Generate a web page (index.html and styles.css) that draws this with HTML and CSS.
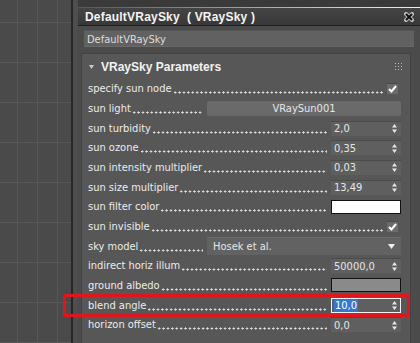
FILE: index.html
```html
<!DOCTYPE html>
<html lang="en">
<head>
    <meta charset="UTF-8">
    <title>DefaultVRaySky</title>
    <link rel="stylesheet" href="styles.css">
</head>
<body>
<div class="screen">
    <div class="viewport"></div>
    <div class="viewport-edge"></div>

    <div class="panel">
        <div class="top-strip"></div>
        <div class="titlebar">
            <span class="title">DefaultVRaySky&nbsp; ( VRaySky )</span>
            <svg class="close" width="10" height="10" viewBox="0 0 10 10">
                <path d="M2 2 L8 8 M8 2 L2 8" stroke="#bdbdbd" stroke-width="4" stroke-linecap="square"/>
                <path d="M2 2 L8 8 M8 2 L2 8" stroke="#111" stroke-width="2"/>
            </svg>
        </div>
        <div class="namebar">
            <div class="name-field">DefaultVRaySky</div>
        </div>

        <div class="rollout">
            <div class="rollout-head">
                <svg class="caret" width="5" height="4" viewBox="0 0 5 4"><path d="M0 0 H5 L2.5 4 Z" fill="#c8c8c8"/></svg>
                <span class="rollout-title">VRaySky Parameters</span>
                <svg class="grip" width="7" height="7" viewBox="0 0 7 7" fill="#bcbcbc">
                    <rect x="0" y="0" width="1" height="1"/><rect x="3" y="0" width="1" height="1"/><rect x="6" y="0" width="1" height="1"/>
                    <rect x="0" y="3" width="1" height="1"/><rect x="3" y="3" width="1" height="1"/><rect x="6" y="3" width="1" height="1"/>
                    <rect x="0" y="6" width="1" height="1"/><rect x="3" y="6" width="1" height="1"/><rect x="6" y="6" width="1" height="1"/>
                </svg>
            </div>

            <div class="rows">
                <div class="row">
                    <span class="label">specify sun node</span><span class="dots"></span>
                    <span class="check"><svg width="9" height="8" viewBox="0 0 9 8"><path d="M1 4 L3.5 6.5 L8 1" fill="none" stroke="#fff" stroke-width="2"/></svg></span>
                </div>
                <div class="row">
                    <span class="label">sun light</span><span class="dots"></span>
                    <span class="button">VRaySun001</span>
                </div>
                <div class="row">
                    <span class="label">sun turbidity</span><span class="dots"></span>
                    <span class="spinner"><span class="value">2,0</span><svg class="arrows" width="5" height="9" viewBox="0 0 5 9"><path d="M0 3.5 L2.5 0 L5 3.5 Z M0 5.5 L5 5.5 L2.5 9 Z" fill="#e6e6e6"/></svg></span>
                </div>
                <div class="row">
                    <span class="label">sun ozone</span><span class="dots"></span>
                    <span class="spinner"><span class="value">0,35</span><svg class="arrows" width="5" height="9" viewBox="0 0 5 9"><path d="M0 3.5 L2.5 0 L5 3.5 Z M0 5.5 L5 5.5 L2.5 9 Z" fill="#e6e6e6"/></svg></span>
                </div>
                <div class="row">
                    <span class="label">sun intensity multiplier</span><span class="dots"></span>
                    <span class="spinner"><span class="value">0,03</span><svg class="arrows" width="5" height="9" viewBox="0 0 5 9"><path d="M0 3.5 L2.5 0 L5 3.5 Z M0 5.5 L5 5.5 L2.5 9 Z" fill="#e6e6e6"/></svg></span>
                </div>
                <div class="row">
                    <span class="label">sun size multiplier</span><span class="dots"></span>
                    <span class="spinner"><span class="value">13,49</span><svg class="arrows" width="5" height="9" viewBox="0 0 5 9"><path d="M0 3.5 L2.5 0 L5 3.5 Z M0 5.5 L5 5.5 L2.5 9 Z" fill="#e6e6e6"/></svg></span>
                </div>
                <div class="row">
                    <span class="label">sun filter color</span><span class="dots"></span>
                    <span class="swatch white"></span>
                </div>
                <div class="row">
                    <span class="label">sun invisible</span><span class="dots"></span>
                    <span class="check"><svg width="9" height="8" viewBox="0 0 9 8"><path d="M1 4 L3.5 6.5 L8 1" fill="none" stroke="#fff" stroke-width="2"/></svg></span>
                </div>
                <div class="row">
                    <span class="label">sky model</span><span class="dots"></span>
                    <span class="dropdown">Hosek et al.
                        <svg class="drop-arrow" width="7" height="5" viewBox="0 0 7 5"><path d="M0 0 H7 L3.5 5 Z" fill="#eee"/></svg>
                    </span>
                </div>
                <div class="row">
                    <span class="label">indirect horiz illum</span><span class="dots"></span>
                    <span class="spinner"><span class="value">50000,0</span><svg class="arrows" width="5" height="9" viewBox="0 0 5 9"><path d="M0 3.5 L2.5 0 L5 3.5 Z M0 5.5 L5 5.5 L2.5 9 Z" fill="#e6e6e6"/></svg></span>
                </div>
                <div class="row">
                    <span class="label">ground albedo</span><span class="dots"></span>
                    <span class="swatch grey"></span>
                </div>
                <div class="row">
                    <span class="label">blend angle</span><span class="dots"></span>
                    <span class="spinner focused"><span class="value"><span class="selected">10,0</span></span><svg class="arrows" width="5" height="9" viewBox="0 0 5 9"><path d="M0 3.5 L2.5 0 L5 3.5 Z M0 5.5 L5 5.5 L2.5 9 Z" fill="#e6e6e6"/></svg></span>
                </div>
                <div class="row">
                    <span class="label">horizon offset</span><span class="dots"></span>
                    <span class="spinner"><span class="value">0,0</span><svg class="arrows" width="5" height="9" viewBox="0 0 5 9"><path d="M0 3.5 L2.5 0 L5 3.5 Z M0 5.5 L5 5.5 L2.5 9 Z" fill="#e6e6e6"/></svg></span>
                </div>
            </div>
        </div>
    </div>

    <div class="marker"></div>
</div>
</body>
</html>
```

FILE: styles.css
```css
* {
    box-sizing: border-box;
    margin: 0;
    padding: 0;
}

body {
    font-family: "DejaVu Sans Condensed", "DejaVu Sans", sans-serif;
    background-color: #4a4a4a;
    color: #e6e6e6;
}

.screen {
    position: relative;
    display: flex;
    width: 420px;
    height: 343px;
    overflow: hidden;
}

/* viewport grid on the left */
.viewport {
    width: 71px;
    background-color: #4a4a4a;
    background-image:
        linear-gradient(to right, #575757 1px, transparent 1px),
        linear-gradient(to bottom, #575757 1px, transparent 1px);
    background-size: 20px 100%, 100% 40px;
    background-position: 17px 0, 0 22px;
}

.viewport-edge {
    width: 7px;
    border-left: 2px solid #272727;
    background-color: #4e4e4e;
}

/* command panel */
.panel {
    flex: 1;
    display: flex;
    flex-direction: column;
    background-color: #4b4b4b;
}

.top-strip {
    height: 8px;
    background-color: #3a3a3a;
    border-bottom: 1px solid;
    border-image: linear-gradient(to right, #555, #f0f0f0) 1;
}

.titlebar {
    height: 18px;
    display: flex;
    align-items: center;
    justify-content: space-between;
    padding: 0 6px 0 7px;
    background: linear-gradient(#454545, #383838);
    border-bottom: 1px solid #1e1e1e;
}

.title {
    font-family: "Liberation Sans", Arial, sans-serif;
    font-size: 12px;
    font-weight: 700;
    letter-spacing: 0.2px;
    color: #f4f4f4;
}

.close {
    display: block;
}

.namebar {
    padding: 4px 6px 5px 6px;
}

.name-field {
    height: 17px;
    padding-left: 3px;
    font-size: 11px;
    line-height: 17px;
    color: #dedede;
    background-color: #616161;
    border-top: 1px solid #555;
    border-bottom: 1px solid #6a6a6a;
}

/* rollout */
.rollout {
    flex: 1;
    margin: 1px 9px 0 3px;
    background-color: #575757;
    border: 1px solid #424242;
    border-bottom: none;
    border-radius: 2px 2px 0 0;
}

.rollout-head {
    height: 25px;
    display: flex;
    align-items: center;
    padding: 0 8px 0 7px;
}

.caret {
    margin-right: 7px;
}

.rollout-title {
    flex: 1;
    font-family: "Liberation Sans", Arial, sans-serif;
    font-size: 12px;
    font-weight: 700;
    color: #f2f2f2;
}

.rows {
    display: grid;
    grid-auto-rows: 19.67px;
    padding: 0 9px 0 6px;
}

.row {
    display: flex;
    align-items: center;
    font-size: 11px;
}

.label {
    white-space: nowrap;
    color: #ececec;
}

.dots {
    flex: 1;
    align-self: stretch;
    margin: 0 4px 0 1px;
    background-image: radial-gradient(circle, #dcdcdc 0.9px, transparent 1.3px);
    background-size: 4.4px 3px;
    background-repeat: repeat-x;
    background-position: 0 calc(50% + 4px);
}

/* controls */
.check {
    width: 11px;
    height: 11px;
    margin-right: 3px;
    display: flex;
    align-items: center;
    justify-content: center;
    background-color: #6b6b6b;
    border-top: 1px solid #4a4a4a;
}

.button {
    width: 194px;
    height: 15px;
    line-height: 15px;
    text-align: center;
    background-color: #6a6a6a;
    border-radius: 2px;
}

.spinner {
    position: relative;
    width: 70px;
    height: 15px;
    display: flex;
    align-items: center;
    padding-left: 3px;
    background-color: #5f5f5f;
    border-top: 1px solid #4b4b4b;
}

.spinner .value {
    flex: 1;
}

.arrows {
    margin-right: 4px;
    display: block;
}

.spinner.focused {
    border: 1px solid #f2f2f2;
    padding-left: 2px;
}

.spinner.focused .arrows {
    margin-right: 3px;
}

.selected {
    background-color: #3278d0;
    color: #fff;
    padding: 0 1px;
}

.swatch {
    width: 70px;
    height: 14px;
    border: 1px solid #111;
}

.swatch.white {
    background-color: #fff;
}

.swatch.grey {
    background-color: #8a8a8a;
}

.dropdown {
    width: 194px;
    height: 18px;
    display: flex;
    align-items: center;
    justify-content: space-between;
    padding: 0 6px 0 6px;
    background-color: #626262;
    border-top: 1px solid #6c6c6c;
}

.drop-arrow {
    display: block;
}

/* red annotation box drawn over the screenshot */
.marker {
    position: absolute;
    left: 63px;
    top: 294px;
    width: 347px;
    height: 23px;
    border: 3px solid #e0161c;
    border-radius: 2px;
}
```
